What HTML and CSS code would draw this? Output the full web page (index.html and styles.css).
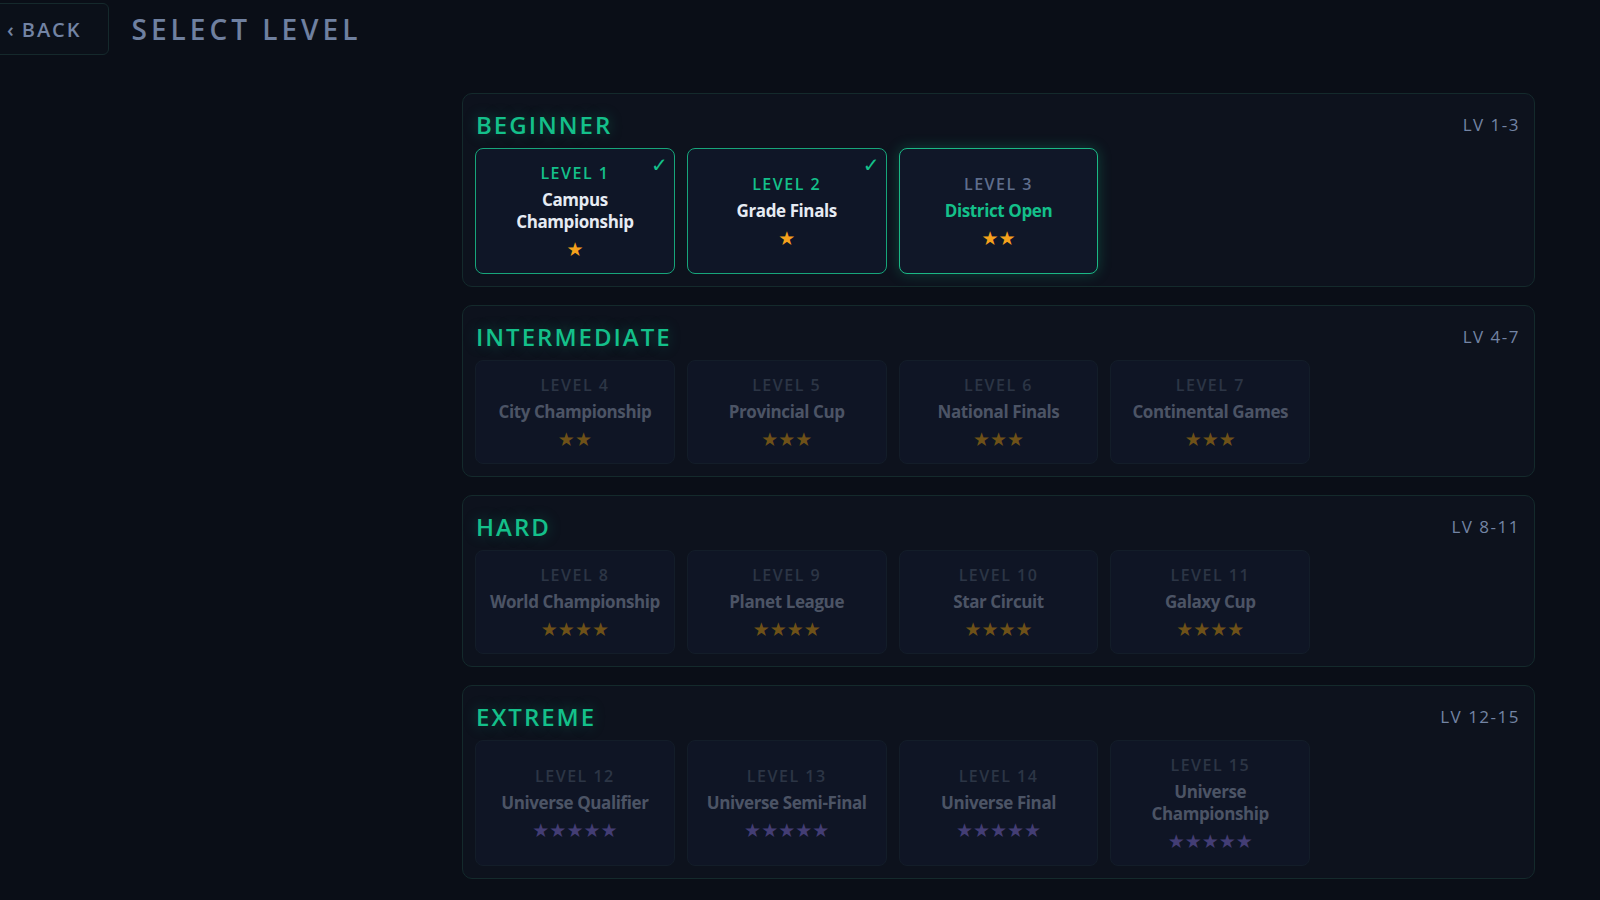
FILE: index.html
```html
<!DOCTYPE html>
<html lang="en">

<head>
  <meta charset="UTF-8">
  <meta name="viewport" content="width=device-width, initial-scale=1.0">
  <title>Select Level</title>
  <link rel="stylesheet" href="styles.css">
</head>

<body>
  <header class="topbar">
    <button class="back-btn"><span class="chev">‹</span>BACK</button>
    <h1 class="page-title">SELECT LEVEL</h1>
  </header>

  <main class="levels">
    <section class="tier">
      <div class="tier-head">
        <h2 class="tier-name">BEGINNER</h2>
        <span class="tier-range">LV 1-3</span>
      </div>
      <div class="tier-grid">
        <div class="level done">
          <span class="tick">✓</span>
          <div class="level-no">LEVEL 1</div>
          <div class="level-name">Campus<br>Championship</div>
          <div class="stars">★</div>
        </div>
        <div class="level done">
          <span class="tick">✓</span>
          <div class="level-no">LEVEL 2</div>
          <div class="level-name">Grade Finals</div>
          <div class="stars">★</div>
        </div>
        <div class="level current">
          <div class="level-no">LEVEL 3</div>
          <div class="level-name">District Open</div>
          <div class="stars">★★</div>
        </div>
      </div>
    </section>

    <section class="tier">
      <div class="tier-head">
        <h2 class="tier-name">INTERMEDIATE</h2>
        <span class="tier-range">LV 4-7</span>
      </div>
      <div class="tier-grid">
        <div class="level locked">
          <div class="level-no">LEVEL 4</div>
          <div class="level-name">City Championship</div>
          <div class="stars">★★</div>
        </div>
        <div class="level locked">
          <div class="level-no">LEVEL 5</div>
          <div class="level-name">Provincial Cup</div>
          <div class="stars">★★★</div>
        </div>
        <div class="level locked">
          <div class="level-no">LEVEL 6</div>
          <div class="level-name">National Finals</div>
          <div class="stars">★★★</div>
        </div>
        <div class="level locked">
          <div class="level-no">LEVEL 7</div>
          <div class="level-name">Continental Games</div>
          <div class="stars">★★★</div>
        </div>
      </div>
    </section>

    <section class="tier">
      <div class="tier-head">
        <h2 class="tier-name">HARD</h2>
        <span class="tier-range">LV 8-11</span>
      </div>
      <div class="tier-grid">
        <div class="level locked">
          <div class="level-no">LEVEL 8</div>
          <div class="level-name">World Championship</div>
          <div class="stars">★★★★</div>
        </div>
        <div class="level locked">
          <div class="level-no">LEVEL 9</div>
          <div class="level-name">Planet League</div>
          <div class="stars">★★★★</div>
        </div>
        <div class="level locked">
          <div class="level-no">LEVEL 10</div>
          <div class="level-name">Star Circuit</div>
          <div class="stars">★★★★</div>
        </div>
        <div class="level locked">
          <div class="level-no">LEVEL 11</div>
          <div class="level-name">Galaxy Cup</div>
          <div class="stars">★★★★</div>
        </div>
      </div>
    </section>

    <section class="tier">
      <div class="tier-head">
        <h2 class="tier-name">EXTREME</h2>
        <span class="tier-range">LV 12-15</span>
      </div>
      <div class="tier-grid">
        <div class="level locked">
          <div class="level-no">LEVEL 12</div>
          <div class="level-name">Universe Qualifier</div>
          <div class="stars purple">★★★★★</div>
        </div>
        <div class="level locked">
          <div class="level-no">LEVEL 13</div>
          <div class="level-name">Universe Semi-Final</div>
          <div class="stars purple">★★★★★</div>
        </div>
        <div class="level locked">
          <div class="level-no">LEVEL 14</div>
          <div class="level-name">Universe Final</div>
          <div class="stars purple">★★★★★</div>
        </div>
        <div class="level locked">
          <div class="level-no">LEVEL 15</div>
          <div class="level-name">Universe<br>Championship</div>
          <div class="stars purple">★★★★★</div>
        </div>
      </div>
    </section>
  </main>
</body>

</html>
```

FILE: styles.css
```css
:root {
  --bg: #0a0e17;
  --panel: #0d121d;
  --card: #0f1525;
  --green: #14c08a;
  --muted: #7384a4;
  --orange: #f5a11c;
}

body {
  margin: 0;
  background: var(--bg);
  font-family: "Open Sans", "Noto Sans", "DejaVu Sans", sans-serif;
  color: #e6ebf3;
}

.topbar {
  display: flex;
  align-items: center;
  gap: 23px;
  padding-top: 2px;
  height: 54px;
}

.back-btn {
  margin-left: -12px;
  height: 52px;
  padding: 0 26px 0 18px;
  background: #0b1019;
  border: 1px solid #15292c;
  border-radius: 6px;
  color: var(--muted);
  font-family: inherit;
  font-size: 20px;
  font-weight: 600;
  letter-spacing: 2px;
  display: flex;
  align-items: center;
  gap: 8px;
}

.chev {
  font-size: 20px;
  letter-spacing: 0;
}

.page-title {
  margin: 0;
  font-size: 28px;
  font-weight: 600;
  letter-spacing: 4px;
  color: #6f80a0;
}

.levels {
  width: 1073px;
  margin: 37px 65px 0 auto;
  display: flex;
  flex-direction: column;
  gap: 18px;
}

.tier {
  box-sizing: border-box;
  background: var(--panel);
  border: 1px solid #142a2c;
  border-radius: 10px;
  padding: 12px 14px 12px 12px;
}

.tier-head {
  display: flex;
  align-items: center;
  justify-content: space-between;
  height: 36px;
  margin-bottom: 6px;
  padding-left: 1px;
}

.tier-name {
  margin: 0;
  font-size: 24px;
  font-weight: 600;
  letter-spacing: 2px;
  color: var(--green);
  text-shadow: 0 0 14px rgba(20, 192, 138, 0.35);
}

.tier-range {
  font-size: 17px;
  font-weight: 500;
  letter-spacing: 1.5px;
  color: var(--muted);
}

.tier-grid {
  display: grid;
  grid-template-columns: repeat(5, 1fr);
  gap: 12px;
  margin-right: -2px;
}

.level {
  position: relative;
  box-sizing: border-box;
  min-height: 104px;
  padding: 13px 8px;
  display: flex;
  flex-direction: column;
  justify-content: center;
  align-items: center;
  text-align: center;
  background: var(--card);
  border: 1px solid #131d29;
  border-radius: 8px;
}

.level-no {
  font-size: 16px;
  font-weight: 600;
  letter-spacing: 1.5px;
  line-height: 22px;
}

.level-name {
  margin-top: 5px;
  font-size: 17px;
  font-weight: 700;
  letter-spacing: -0.4px;
  line-height: 22px;
}

.stars {
  margin-top: 5px;
  font-family: "DejaVu Sans", sans-serif;
  font-size: 19px;
  line-height: 22px;
  color: var(--orange);
}

.tick {
  position: absolute;
  top: 4px;
  right: 6px;
  font-family: "DejaVu Sans", sans-serif;
  font-size: 20px;
  color: var(--green);
}

.done {
  border-color: #17a57a;
  background: #0f1627;
}

.done .level-no {
  color: var(--green);
}

.current {
  border-color: #1bb885;
  background: #101728;
  box-shadow: 0 0 14px rgba(20, 192, 138, 0.28);
}

.current .level-no {
  color: #5f6e8c;
}

.current .level-name {
  color: var(--green);
}

.locked .level-no {
  color: #2c3545;
}

.locked .level-name {
  color: #4c5465;
}

.locked .stars {
  color: #6e5118;
}

.locked .stars.purple {
  color: #433d74;
}
```
